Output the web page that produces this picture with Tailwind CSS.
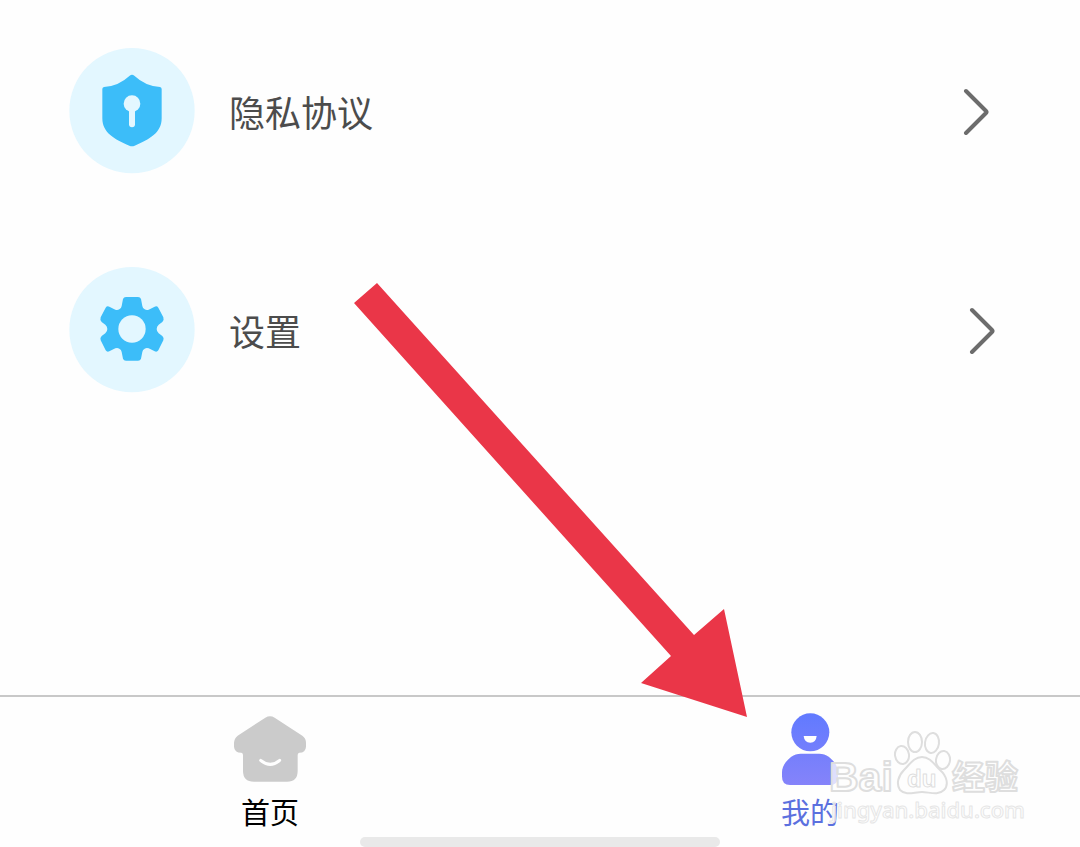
<!DOCTYPE html>
<html lang="zh-CN">
  <head>
    <meta charset="UTF-8" />
    <meta name="viewport" content="width=device-width, initial-scale=1.0" />
    <title>我的</title>
    <script src="https://cdn.jsdelivr.net/npm/@tailwindcss/browser@4"></script>
  </head>
  <body class="bg-[#fefefe] font-['Noto_Sans_CJK_SC',sans-serif]">
    <div class="relative min-h-screen flex flex-col overflow-hidden">
      <!-- Menu rows -->
      <main class="flex-1 flex flex-col gap-[93px] pt-12 pb-20">
        <a href="#" class="flex items-center gap-[34px] pl-[69px] pr-[90px]">
          <svg class="size-[126px] shrink-0" viewBox="27 24 378 378">
            <circle cx="216" cy="212" r="188" fill="#e3f7ff" />
            <path
              d="M209 107 Q216 102 223 107 Q256 138 300 141 Q305 142 305 147 V235 C305 279 268 298 224 317 Q216 321 208 317 C164 298 127 279 127 235 V147 Q127 142 132 141 Q176 138 209 107 Z"
              fill="#3cbdf9"
            />
            <circle cx="216" cy="191" r="25" fill="#e3f7ff" />
            <path d="M216 195 V253" stroke="#e3f7ff" stroke-width="18" stroke-linecap="round" />
          </svg>
          <span class="flex-1 text-4xl text-[#4c4c4c]">隐私协议</span>
          <svg class="w-7 h-12 shrink-0" viewBox="0 0 28 48" fill="none">
            <path d="M4 4 L24 24 Q25 25 24 26 L4 46" stroke="#6c6c6c" stroke-width="4" stroke-linecap="round" />
          </svg>
        </a>

        <a href="#" class="flex items-center gap-[34px] pl-[69px] pr-[84px]">
          <svg class="size-[126px] shrink-0" viewBox="27 21 378 378">
            <circle cx="216" cy="209" r="188" fill="#e3f7ff" />
            <path
              d="M189 117 Q191 111 198 111 H234 Q241 111 243 117 L247 138 Q248 145 254 148 Q260 152 266 149 L284 140 Q291 137 295 143 L310 172 Q313 181 307 186 L296 194 Q290 199 290 207 Q290 215 296 220 L307 228 Q313 233 310 241 L295 271 Q291 277 284 274 L266 265 Q260 262 254 266 Q248 269 247 276 L243 296 Q241 302 234 302 H198 Q191 302 189 296 L185 276 Q184 269 178 266 Q172 262 166 265 L148 274 Q141 277 137 271 L122 241 Q119 233 125 228 L136 220 Q142 215 142 207 Q142 199 136 194 L125 186 Q119 181 122 172 L137 143 Q141 137 148 140 L166 149 Q172 152 178 148 Q184 145 185 138 Z"
              fill="#3cbdf9"
            />
            <circle cx="216" cy="207" r="41" fill="#e3f7ff" />
          </svg>
          <span class="flex-1 text-4xl text-[#4c4c4c]">设置</span>
          <svg class="w-7 h-12 shrink-0" viewBox="0 0 28 48" fill="none">
            <path d="M4 4 L24 24 Q25 25 24 26 L4 46" stroke="#6c6c6c" stroke-width="4" stroke-linecap="round" />
          </svg>
        </a>
      </main>

      <!-- Tab bar -->
      <nav class="grid grid-cols-2 border-t-2 border-[#c8c8c8] pt-4 pb-4">
        <a href="#" class="flex flex-col items-center gap-1.5 text-black">
          <svg class="w-[72px] h-[72px]" viewBox="42 69 216 216">
            <path
              d="M136 83 Q150 75 164 83 L247 137 Q258 145 258 158 V170 Q257 188 238 188 Q233 189 233 195 V243 Q233 275 201 275 H102 Q69 275 69 243 V195 Q69 189 64 188 Q43 188 42 170 V158 Q43 145 53 137 Z"
              fill="#cbcbcb"
            />
            <path d="M122 211 Q151 235 179 211" fill="none" stroke="#fefefe" stroke-width="9" stroke-linecap="round" />
          </svg>
          <span class="text-[29px] leading-10">首页</span>
        </a>
        <a href="#" class="flex flex-col items-center gap-1.5 text-[#5b70df]">
          <svg class="w-[56px] h-[72px]" viewBox="36 69 168 216">
            <defs>
              <linearGradient id="person" gradientUnits="userSpaceOnUse" x1="0" y1="69" x2="0" y2="285">
                <stop offset="0" stop-color="#617aff" />
                <stop offset="1" stop-color="#8583fa" />
              </linearGradient>
            </defs>
            <circle cx="121" cy="127" r="57" fill="url(#person)" />
            <path d="M101 138 H140 Q138 158 121 158 Q103 158 101 138 Z" fill="#fefefe" />
            <path
              d="M92 191 H148 C178 191 204 223 204 246 V260 Q204 285 180 285 H60 Q36 285 36 260 V246 C36 223 62 191 92 191 Z"
              fill="url(#person)"
            />
          </svg>
          <span class="text-[29px] leading-10">我的</span>
        </a>
      </nav>

      <!-- Home indicator -->
      <div class="absolute bottom-0 left-1/3 right-1/3 h-[10px] rounded-full bg-[#e9e9e9]"></div>

      <!-- Watermark -->
      <svg
        class="absolute right-[54px] bottom-5 w-[200px] h-[100px] pointer-events-none"
        viewBox="826 727 200 100"
        fill="#fefefe"
        fill-opacity="0.75"
        stroke="#dedede"
        stroke-width="2"
        stroke-linejoin="round"
      >
        <ellipse cx="902" cy="755" rx="7" ry="9" transform="rotate(-8 902 755)" />
        <ellipse cx="915" cy="742" rx="7" ry="10" />
        <ellipse cx="932" cy="743" rx="7" ry="10" transform="rotate(8 932 743)" />
        <ellipse cx="943" cy="760" rx="7" ry="9" transform="rotate(8 943 760)" />
        <path d="M922 757 C930 757 934 764 940 770 C947 776 949 785 944 790 C938 796 929 792 922 792 C914 792 906 796 900 790 C896 784 898 776 904 770 C910 764 914 757 922 757 Z" />
        <g class="font-['Liberation_Sans',sans-serif] font-bold">
          <text x="829" y="791" font-size="41">Bai</text>
          <text x="907" y="787" font-size="24" stroke-width="1">du</text>
        </g>
        <text x="952" y="789" font-size="33" class="font-['Noto_Sans_CJK_SC',sans-serif] font-bold">经验</text>
        <text x="831" y="818" font-size="22" stroke="#e6e6e6" stroke-width="1" class="font-['Noto_Sans',sans-serif] font-medium">jingyan.baidu.com</text>
      </svg>

      <!-- Arrow pointing at the tab -->
      <svg
        class="absolute left-[353px] top-[282px] w-[395px] h-[436px] pointer-events-none"
        viewBox="353 282 395 436"
      >
        <path d="M377 283 L694 635 L724 609 L747 717 L641 683 L671 656 L354 303 Z" fill="#ea3648" />
      </svg>
    </div>
  </body>
</html>
